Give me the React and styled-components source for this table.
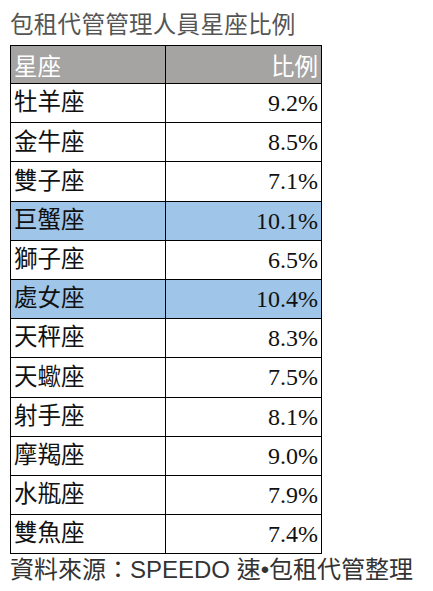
import React from 'react';
import styled, { createGlobalStyle } from 'styled-components';

const GlobalStyle = createGlobalStyle`
  html, body {
    margin: 0;
    padding: 0;
    background: #fff;
  }
  body {
    font-family: "Liberation Serif", "Noto Sans CJK TC", serif;
  }
`;

const Page = styled.div`
  padding: 10px 0 0 10px;
  width: 433px;
  height: 591px;
  box-sizing: border-box;
  overflow: hidden;
`;

const Title = styled.h1`
  margin: 0 0 4px;
  font-family: "Liberation Serif", "Noto Sans CJK TC", serif;
  font-weight: 400;
  font-size: 23.5px;
  line-height: 31px;
  color: #555;
  letter-spacing: 0.3px;
`;

const Table = styled.table`
  border-collapse: collapse;
  width: 312px;
  table-layout: fixed;
`;

const HeadCell = styled.th`
  height: 37px;
  padding: 0 3px;
  background: #a6a4a2;
  color: #fff;
  font-weight: 400;
  font-size: 23.5px;
  text-align: ${(p) => p.$align || 'left'};
  border: 1px solid #000;
  width: ${(p) => p.$width};
`;

const Row = styled.tr`
  background: ${(p) => (p.$highlight ? '#9fc5e8' : '#fff')};
`;

const Cell = styled.td`
  height: 38.2px;
  padding: 0 3px;
  font-size: ${(p) => (p.$align === 'right' ? '24px' : '23.5px')};
  color: #111;
  text-align: ${(p) => p.$align || 'left'};
  border: 1px solid #000;
  line-height: 1;
`;

const Source = styled.p`
  margin: 1px 0 0;
  font-family: "Liberation Sans", "Noto Sans CJK TC", sans-serif;
  font-size: 24px;
  line-height: 30px;
  color: #333;
  white-space: nowrap;
`;

const rows = [
  { sign: '牡羊座', pct: '9.2%' },
  { sign: '金牛座', pct: '8.5%' },
  { sign: '雙子座', pct: '7.1%' },
  { sign: '巨蟹座', pct: '10.1%', highlight: true },
  { sign: '獅子座', pct: '6.5%' },
  { sign: '處女座', pct: '10.4%', highlight: true },
  { sign: '天秤座', pct: '8.3%' },
  { sign: '天蠍座', pct: '7.5%' },
  { sign: '射手座', pct: '8.1%' },
  { sign: '摩羯座', pct: '9.0%' },
  { sign: '水瓶座', pct: '7.9%' },
  { sign: '雙魚座', pct: '7.4%' },
];

const App = () => (
  <Page>
    <GlobalStyle />
    <Title>包租代管管理人員星座比例</Title>
    <Table>
      <thead>
        <tr>
          <HeadCell $width="148px">星座</HeadCell>
          <HeadCell $align="right">比例</HeadCell>
        </tr>
      </thead>
      <tbody>
        {rows.map((r) => (
          <Row key={r.sign} $highlight={r.highlight}>
            <Cell>{r.sign}</Cell>
            <Cell $align="right">{r.pct}</Cell>
          </Row>
        ))}
      </tbody>
    </Table>
    <Source>資料來源：SPEEDO 速•包租代管整理</Source>
  </Page>
);

export default App;
